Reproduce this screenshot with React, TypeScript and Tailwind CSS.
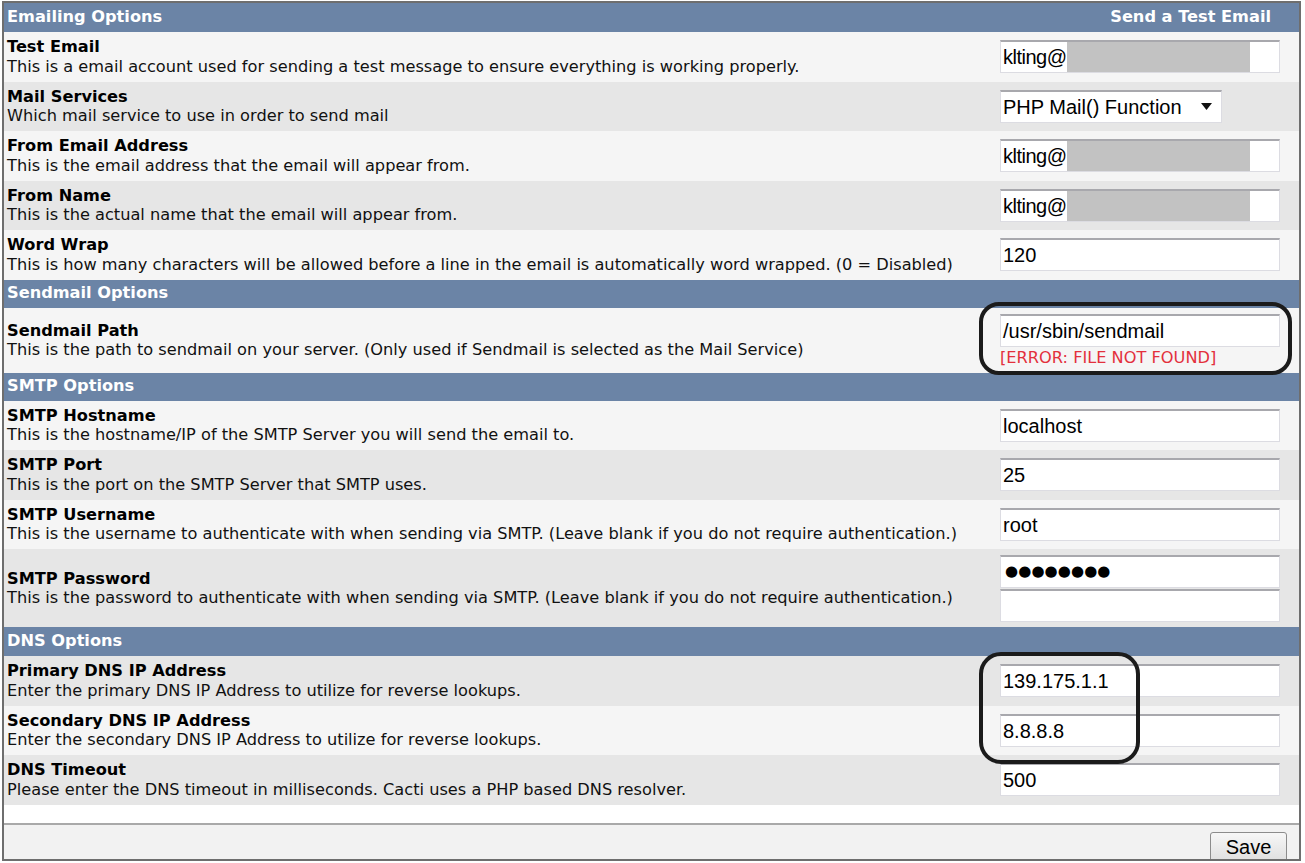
import type { ReactNode } from 'react'

// light / dark row backgrounds, as in the cacti settings table
const BG = { l: 'bg-[#f5f5f5]', d: 'bg-[#e6e6e6]' }

function Box({ children, wide = true }: { children?: ReactNode; wide?: boolean }) {
  return (
    <div
      className={`${wide ? 'w-[280px]' : 'w-[222px]'} flex h-[33px] items-center overflow-hidden border border-t-2 border-[#dcdce2] border-t-[#a8a8ad] bg-white pl-[2px] font-['Liberation_Sans',Arial,sans-serif] text-[20px] text-black`}
    >
      {children}
    </div>
  )
}

function Redacted() {
  return (
    <Box>
      <span className="tracking-[-0.5px]">klting@</span>
      <div className="h-full w-[183px] bg-[#c2c2c2]" />
    </Box>
  )
}

function Header({ title, right, h }: { title: string; right?: string; h: string }) {
  return (
    <div
      className={`${h} flex items-center justify-between bg-[#6b84a6] pl-[3px] pr-[28px] text-[16.2px] font-bold text-white`}
    >
      <span>{title}</span>
      {right && <span>{right}</span>}
    </div>
  )
}

function Row({
  label,
  desc,
  bg,
  h = 'h-[49.5px]',
  children,
}: {
  label: string
  desc: string
  bg: 'l' | 'd'
  h?: string
  children: ReactNode
}) {
  return (
    <div className={`grid grid-cols-[1fr_299px] ${h} ${BG[bg]}`}>
      <div className="flex flex-col justify-center pl-[3px] leading-[19.5px]">
        <span className="text-[16.2px] font-bold text-black">{label}</span>
        <span className="text-[16.2px] text-[#111]">{desc}</span>
      </div>
      <div className="flex flex-col justify-center">{children}</div>
    </div>
  )
}

export default function App() {
  return (
    <div className="relative ml-[2px] mt-[1px] w-[1299px] border-2 border-[#6e6e6e] bg-white font-['DejaVu_Sans',Verdana,sans-serif]">
      <Header title="Emailing Options" right="Send a Test Email" h="h-[29px]" />
      <Row
        bg="l"
        label="Test Email"
        desc="This is a email account used for sending a test message to ensure everything is working properly."
      >
        <Redacted />
      </Row>
      <Row bg="d" label="Mail Services" desc="Which mail service to use in order to send mail">
        <Box wide={false}>
          <span className="flex-1">PHP Mail() Function</span>
          <svg width="11" height="7" viewBox="0 0 11 7" className="mr-[9px]">
            <polygon points="0,0 11,0 5.5,7" fill="#111" />
          </svg>
        </Box>
      </Row>
      <Row bg="l" label="From Email Address" desc="This is the email address that the email will appear from.">
        <Redacted />
      </Row>
      <Row bg="d" label="From Name" desc="This is the actual name that the email will appear from.">
        <Redacted />
      </Row>
      <Row
        bg="l"
        label="Word Wrap"
        desc="This is how many characters will be allowed before a line in the email is automatically word wrapped. (0 = Disabled)"
      >
        <Box>120</Box>
      </Row>

      <Header title="Sendmail Options" h="h-[28px]" />
      <Row
        bg="l"
        h="h-[65px]"
        label="Sendmail Path"
        desc="This is the path to sendmail on your server. (Only used if Sendmail is selected as the Mail Service)"
      >
        <Box>/usr/sbin/sendmail</Box>
        <span className="mt-[1px] text-[16.2px] leading-[19px] text-[#e3303c]">[ERROR: FILE NOT FOUND]</span>
      </Row>

      <Header title="SMTP Options" h="h-[28px]" />
      <Row bg="l" label="SMTP Hostname" desc="This is the hostname/IP of the SMTP Server you will send the email to.">
        <Box>localhost</Box>
      </Row>
      <Row bg="d" label="SMTP Port" desc="This is the port on the SMTP Server that SMTP uses.">
        <Box>25</Box>
      </Row>
      <Row
        bg="l"
        label="SMTP Username"
        desc="This is the username to authenticate with when sending via SMTP. (Leave blank if you do not require authentication.)"
      >
        <Box>root</Box>
      </Row>
      <Row
        bg="d"
        h="h-[78px]"
        label="SMTP Password"
        desc="This is the password to authenticate with when sending via SMTP. (Leave blank if you do not require authentication.)"
      >
        <div className="flex flex-col gap-[1px]">
          <Box>
            <span className="pl-[2px] font-['DejaVu_Sans',sans-serif] text-[15px] tracking-[0.1px]">●●●●●●●●</span>
          </Box>
          <Box />
        </div>
      </Row>

      <Header title="DNS Options" h="h-[29px]" />
      <Row bg="d" label="Primary DNS IP Address" desc="Enter the primary DNS IP Address to utilize for reverse lookups.">
        <Box>139.175.1.1</Box>
      </Row>
      <Row bg="l" label="Secondary DNS IP Address" desc="Enter the secondary DNS IP Address to utilize for reverse lookups.">
        <Box>8.8.8.8</Box>
      </Row>
      <Row
        bg="d"
        label="DNS Timeout"
        desc="Please enter the DNS timeout in milliseconds. Cacti uses a PHP based DNS resolver."
      >
        <Box>500</Box>
      </Row>

      <div className="h-[18px] bg-white" />
      <div className="flex h-[36px] justify-end overflow-hidden border-t-2 border-[#a9a9a9] bg-[#f2f2f2] pr-[12px] pt-[7px]">
        <button
          type="button"
          className="h-[34px] w-[77px] rounded-[3px] border border-[#8c8c8c] bg-gradient-to-b from-[#f7f7f7] to-[#dcdcdc] pb-[4px] font-['Liberation_Sans',Arial,sans-serif] text-[20px] leading-[28px] text-black"
        >
          Save
        </button>
      </div>

      {/* hand-drawn highlight boxes */}
      <div className="pointer-events-none absolute left-[975px] top-[299px] h-[73px] w-[313px] rounded-[20px] border-4 border-[#1b1b1b]" />
      <div className="pointer-events-none absolute left-[975px] top-[649px] h-[112px] w-[161px] rounded-[22px] border-4 border-[#1b1b1b]" />
    </div>
  )
}
